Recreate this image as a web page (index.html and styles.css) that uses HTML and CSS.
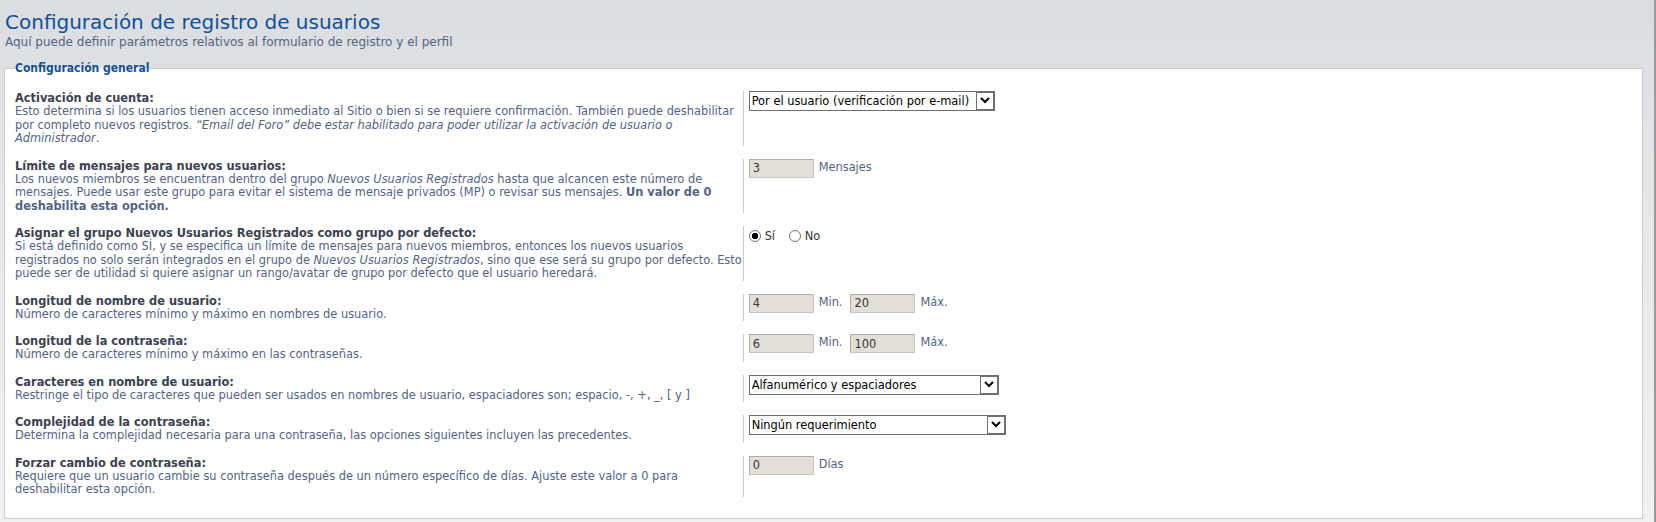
FILE: index.html
```html
<!DOCTYPE html>
<html>
<head lang="es">
    <meta charset="UTF-8">
    <title>Configuración de registro de usuarios</title>
    <link rel="stylesheet" href="styles.css">
</head>
<body>
    <div id="page">
        <h1>Configuración de registro de usuarios</h1>
        <p class="intro">Aquí puede definir parámetros relativos al formulario de registro y el perfil</p>
        <fieldset>
            <legend>Configuración general</legend>
            <dl>
                <dt><label>Activación de cuenta:</label><span class="explain">Esto determina si los usuarios tienen acceso inmediato al Sitio o bien si se requiere confirmación. También puede deshabilitar por completo nuevos registros. <em>“Email del Foro” debe estar habilitado para poder utilizar la activación de usuario o Administrador</em>.</span></dt>
                <dd>
                    <span class="select sel1"><select><option>Por el usuario (verificación por e-mail)</option></select><span class="arrow"><svg width="16" height="15" viewBox="0 0 16 15"><path d="M4 5 L8 9 L12 5" fill="none" stroke="#000" stroke-width="2"/></svg></span></span>
                </dd>
            </dl>
            <dl>
                <dt><label>Límite de mensajes para nuevos usuarios:</label><span class="explain">Los nuevos miembros se encuentran dentro del grupo <em>Nuevos Usuarios Registrados</em> hasta que alcancen este número de mensajes. Puede usar este grupo para evitar el sistema de mensaje privados (MP) o revisar sus mensajes. <strong>Un valor de 0 deshabilita esta opción.</strong></span></dt>
                <dd><input type="text" class="text" value="3"><span class="unit">Mensajes</span></dd>
            </dl>
            <dl>
                <dt><label>Asignar el grupo Nuevos Usuarios Registrados como grupo por defecto:</label><span class="explain">Si está definido como SÍ, y se especifica un límite de mensajes para nuevos miembros, entonces los nuevos usuarios registrados no solo serán integrados en el grupo de <em>Nuevos Usuarios Registrados</em>, sino que ese será su grupo por defecto. Esto puede ser de utilidad si quiere asignar un rango/avatar de grupo por defecto que el usuario heredará.</span></dt>
                <dd class="radios">
                    <label class="radio"><input type="radio" name="def" checked>Sí</label>
                    <label class="radio"><input type="radio" name="def">No</label>
                </dd>
            </dl>
            <dl>
                <dt><label>Longitud de nombre de usuario:</label><span class="explain">Número de caracteres mínimo y máximo en nombres de usuario.</span></dt>
                <dd><input type="text" class="text" value="4"><span class="unit">Min.</span><input type="text" class="text" value="20"><span class="unit">Máx.</span></dd>
            </dl>
            <dl>
                <dt><label>Longitud de la contraseña:</label><span class="explain">Número de caracteres mínimo y máximo en las contraseñas.</span></dt>
                <dd><input type="text" class="text" value="6"><span class="unit">Min.</span><input type="text" class="text" value="100"><span class="unit">Máx.</span></dd>
            </dl>
            <dl>
                <dt><label>Caracteres en nombre de usuario:</label><span class="explain">Restringe el tipo de caracteres que pueden ser usados en nombres de usuario, espaciadores son; espacio, -, +, _, [ y ]</span></dt>
                <dd>
                    <span class="select sel2"><select><option>Alfanumérico y espaciadores</option></select><span class="arrow"><svg width="16" height="15" viewBox="0 0 16 15"><path d="M4 5 L8 9 L12 5" fill="none" stroke="#000" stroke-width="2"/></svg></span></span>
                </dd>
            </dl>
            <dl>
                <dt><label>Complejidad de la contraseña:</label><span class="explain">Determina la complejidad necesaria para una contraseña, las opciones siguientes incluyen las precedentes.</span></dt>
                <dd>
                    <span class="select sel3"><select><option>Ningún requerimiento</option></select><span class="arrow"><svg width="16" height="15" viewBox="0 0 16 15"><path d="M4 5 L8 9 L12 5" fill="none" stroke="#000" stroke-width="2"/></svg></span></span>
                </dd>
            </dl>
            <dl>
                <dt><label>Forzar cambio de contraseña:</label><span class="explain">Requiere que un usuario cambie su contraseña después de un número específico de días. Ajuste este valor a 0 para deshabilitar esta opción.</span></dt>
                <dd><input type="text" class="text" value="0"><span class="unit">Días</span></dd>
            </dl>
        </fieldset>
    </div>
</body>
</html>
```

FILE: styles.css
```css
*{
    margin: 0;
    padding: 0;
}
body{
    font-family: "DejaVu Sans", sans-serif;
    font-size: 11.4px;
    color: #536482;
    background: #f1f1f1;
    overflow: hidden;
}
div#page{
    width: 1656px;
    height: 522px;
    box-sizing: border-box;
    padding: 10px 11px 0 4px;
    border-right: 2px solid #9a9a9a;
    background: linear-gradient(#dadde1, #e6e7e9 40%, #f1f1f1);
}
h1{
    font-size: 20px;
    font-weight: normal;
    line-height: 24px;
    color: #115098;
    padding-left: 1px;
}
p.intro{
    font-size: 12px;
    line-height: 14px;
    margin-top: 1px;
    padding-left: 1px;
}
fieldset{
    margin-top: 12px;
    padding: 14px 10px 19px;
    border: 1px solid #cccccc;
    background: #ffffff;
}
legend{
    font-family: "DejaVu Sans Condensed", "DejaVu Sans", sans-serif;
    font-stretch: condensed;
    font-weight: bold;
    font-size: 12px;
    line-height: 14px;
    color: #115098;
}
dl{
    display: flex;
    padding: 2px 0;
    margin-bottom: 9px;
}
dl:last-child{
    margin-bottom: 0;
}
dt{
    width: 45%;
    flex: none;
}
dt label{
    display: block;
    font-weight: bold;
    line-height: 14px;
    color: #3b4250;
}
dt .explain{
    display: block;
    line-height: 13.5px;
}
dd{
    flex: 1;
    border-left: 1px solid #cccccc;
    padding-left: 5px;
}
input.text{
    width: 65px;
    height: 19px;
    box-sizing: border-box;
    padding: 0 3px;
    border: 1px solid #c9c6bf;
    border-top-color: #b0ada6;
    border-left-color: #b0ada6;
    background: #e2dfd9;
    font-family: inherit;
    font-size: 11.4px;
    color: #333333;
    vertical-align: top;
}
.unit{
    display: inline-block;
    line-height: 17px;
    margin: 0 8px 0 5px;
    vertical-align: top;
}
.select{
    position: relative;
    display: inline-block;
    vertical-align: top;
}
.select select{
    appearance: none;
    -webkit-appearance: none;
    width: 100%;
    height: 20px;
    box-sizing: border-box;
    border: 1px solid #6f6f6f;
    background: #ffffff;
    padding: 0 2px;
    font-family: inherit;
    font-size: 11.4px;
    color: #000000;
}
.select .arrow{
    position: absolute;
    right: 1px;
    top: 1px;
    width: 16px;
    height: 16px;
    border: 1px solid #6f6f6f;
    background: #ffffff;
    pointer-events: none;
}
.select .arrow svg{
    display: block;
}
.sel1{ width: 246px; }
.sel2{ width: 250px; }
.sel3{ width: 257px; }
dd.radios{
    padding-top: 3px;
}
label.radio{
    display: inline-flex;
    align-items: center;
    margin-right: 10px;
    color: #333333;
}
label.radio input{
    appearance: none;
    -webkit-appearance: none;
    width: 12px;
    height: 12px;
    border: 1px solid #707070;
    border-radius: 50%;
    background: #ffffff;
    margin-right: 4px;
}
label.radio input:checked{
    background: radial-gradient(circle, #000000 3px, #ffffff 3.5px);
}
```
